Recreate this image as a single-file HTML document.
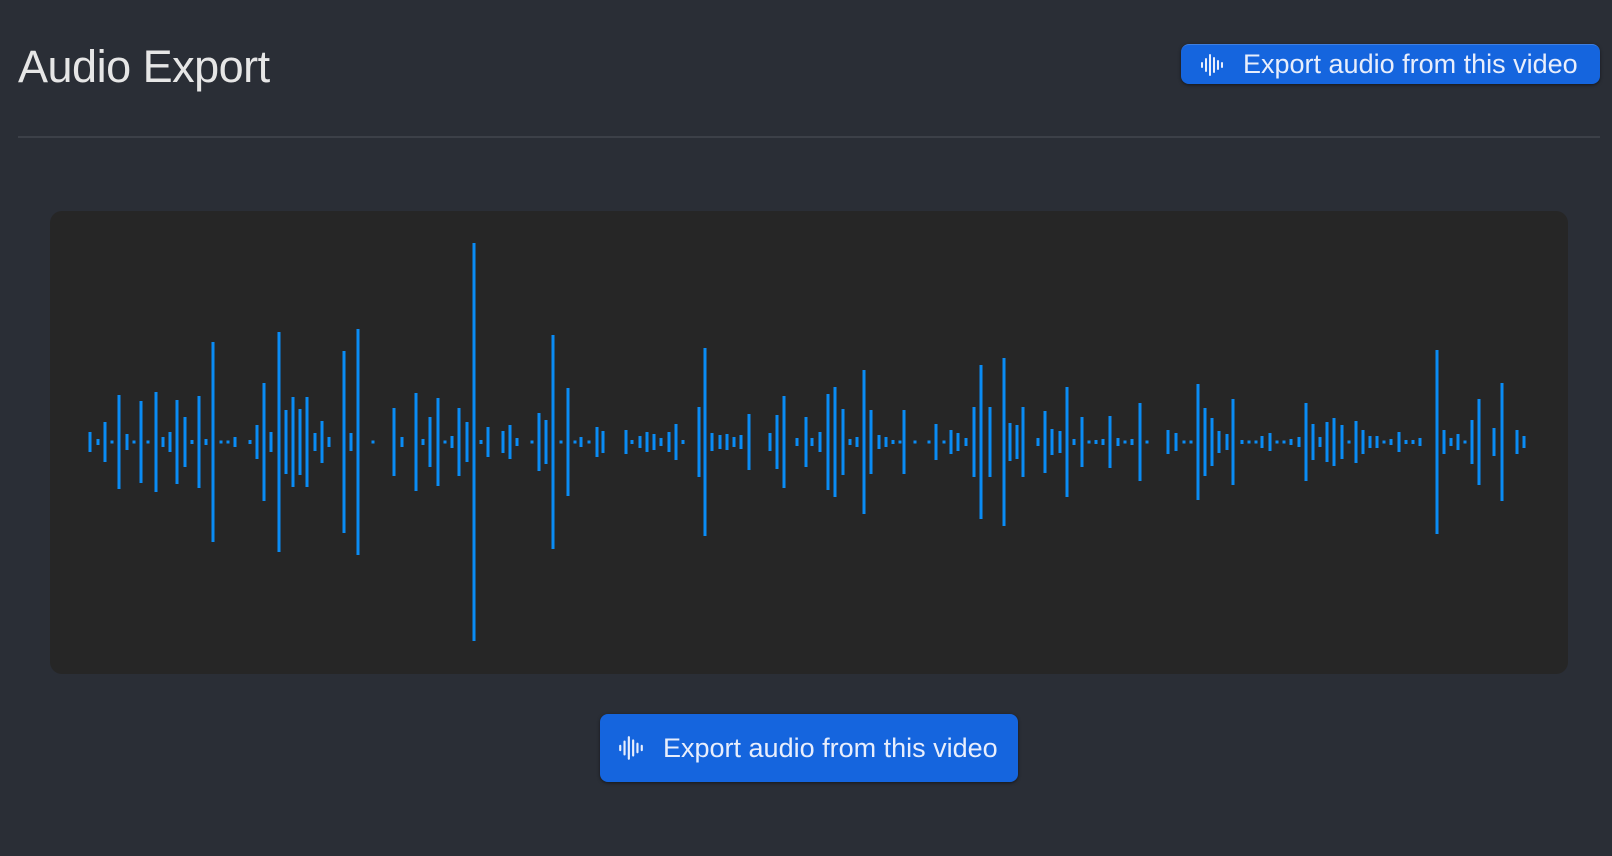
<!DOCTYPE html>
<html><head><meta charset="utf-8"><style>
html,body{margin:0;padding:0;background:#2a2e36;width:1612px;height:856px;overflow:hidden;font-family:"Liberation Sans",sans-serif}
h1{position:absolute;left:18px;top:42px;margin:0;font-size:45px;font-weight:normal;color:#e6e6e6;line-height:50px;letter-spacing:-0.5px}
.btn{position:absolute;background:#1565de;color:#e8eefc;border-radius:8px;box-shadow:0 1px 3px rgba(0,0,0,.5);display:flex;align-items:center;font-size:27px;white-space:nowrap}
.hr{position:absolute;left:18px;top:136px;width:1582px;height:2px;background:#3c4048}
.panel{position:absolute;left:50px;top:211px;width:1518px;height:463px;background:#262626;border-radius:12px}
svg.w{position:absolute;left:0;top:0}
</style></head><body>
<h1>Audio Export</h1>
<div class="btn" style="left:1181px;top:44px;width:419px;height:40px;border-top:1px solid #3f7fe0;box-sizing:border-box">
<svg width="24" height="26" viewBox="0 0 24 26" style="margin-left:19px;margin-right:19px" stroke="#e8eefc" stroke-width="2" stroke-linecap="round"><path d="M2 11v4M6 7v12M10 3v20M14 6v14M18 9v8M22 11v4"/></svg>
<span>Export audio from this video</span></div>
<div class="hr"></div>
<div class="panel"></div>
<svg class="w" width="1612" height="856" fill="#0a8cf5" id="wv"></svg>
<div class="btn" style="left:600px;top:714px;width:418px;height:68px">
<svg width="26" height="28" viewBox="0 0 24 26" style="margin-left:18px;margin-right:19px" stroke="#e8eefc" stroke-width="2" stroke-linecap="round"><path d="M2 11v4M6 7v12M10 3v20M14 6v14M18 9v8M22 11v4"/></svg>
<span>Export audio from this video</span></div>
<script>
var d=[[90,20],[98,6],[105,40],[112,2],[119,94],[127,16],[134,2],[141,82],[148,2],[156,100],[163,10],[170,20],[177,84],[185,50],[192,4],[199,92],[206,6],[213,200],[221,2],[228,2],[235,10],[250,4],[257,34],[264,118],[271,20],[279,220],[286,64],[293,90],[300,66],[307,90],[315,18],[322,42],[329,10],[344,182],[351,18],[358,226],[373,2],[394,68],[402,10],[416,98],[423,6],[430,50],[438,88],[445,2],[452,12],[459,68],[467,40],[474,398],[481,4],[488,30],[503,22],[510,34],[517,8],[532,2],[539,58],[546,44],[553,214],[561,2],[568,108],[575,2],[581,10],[589,2],[597,30],[603,22],[626,24],[632,4],[640,12],[647,20],[654,16],[661,8],[669,20],[676,36],[683,4],[699,70],[705,188],[712,18],[720,14],[727,16],[734,10],[741,14],[749,56],[770,18],[777,54],[784,92],[797,8],[806,50],[812,8],[820,20],[828,96],[835,110],[843,66],[850,6],[857,10],[864,144],[871,64],[879,14],[886,10],[893,4],[900,2],[904,64],[915,2],[929,2],[936,36],[944,2],[951,24],[958,18],[966,8],[974,70],[981,154],[990,70],[1004,168],[1010,38],[1017,34],[1023,70],[1038,8],[1045,62],[1052,26],[1060,22],[1067,110],[1074,6],[1082,50],[1089,2],[1096,4],[1103,6],[1110,52],[1118,8],[1125,2],[1132,6],[1140,78],[1147,2],[1168,24],[1176,18],[1184,2],[1191,2],[1198,116],[1205,68],[1212,48],[1219,22],[1227,16],[1233,86],[1242,4],[1249,2],[1256,2],[1262,12],[1270,18],[1277,2],[1284,2],[1291,6],[1299,10],[1306,78],[1313,36],[1320,10],[1327,40],[1334,48],[1342,34],[1349,2],[1356,42],[1363,24],[1370,12],[1377,12],[1384,2],[1391,6],[1399,20],[1406,4],[1413,4],[1420,8],[1437,184],[1444,24],[1451,8],[1458,16],[1465,2],[1472,44],[1479,86],[1494,28],[1502,118],[1517,24],[1524,12]];
var s='';d.forEach(function(b){var h=Math.max(b[1],3);s+='<rect x="'+(b[0]-1.5)+'" y="'+(442-h/2)+'" width="3" height="'+h+'"/>';});
document.getElementById('wv').innerHTML=s;
</script>
</body></html>
